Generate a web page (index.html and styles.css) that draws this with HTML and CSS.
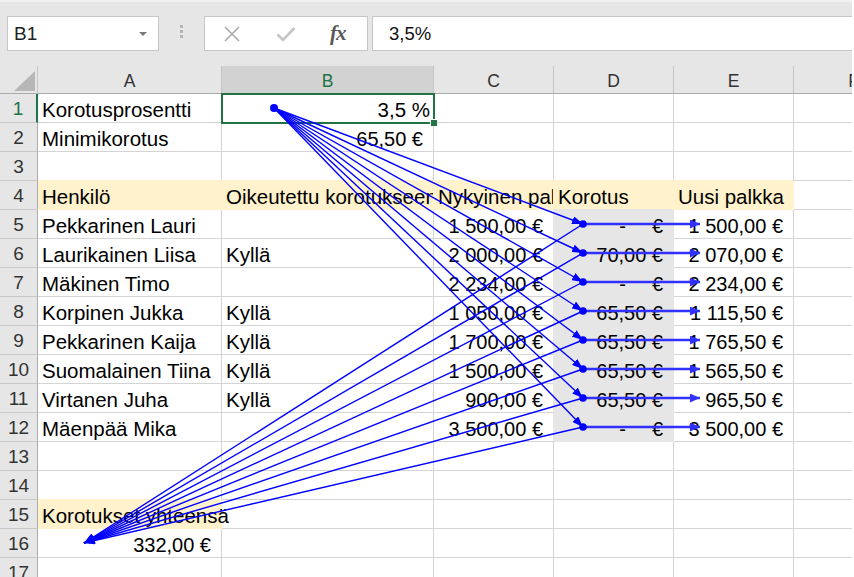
FILE: index.html
```html
<!DOCTYPE html>
<html lang="fi">
<head>
    <meta charset="UTF-8">
    <title>Korotukset</title>
    <link rel="stylesheet" href="styles.css">
</head>
<body>
<div class="page">

    <!-- formula bar -->
    <div class="toolbar">
        <div class="namebox"><span>B1</span><span class="caret"></span></div>
        <div class="grip"><i></i><i></i><i></i></div>
        <div class="fbuttons">
            <svg class="ico" width="18" height="18" viewBox="0 0 18 18"><path d="M2 2L16 16M16 2L2 16" stroke="#a8a8a8" stroke-width="1.5" fill="none"/></svg>
            <svg class="ico" width="20" height="16" viewBox="0 0 20 16"><path d="M1.5 8.5L7 14L18.5 2" stroke="#c6c6c6" stroke-width="2.6" fill="none"/></svg>
            <span class="fx">fx</span>
        </div>
        <div class="finput">3,5%</div>
    </div>

    <!-- sheet -->
    <div class="sheet">
        <div class="corner"></div>
        <div class="hd">A</div>
        <div class="hd sel">B</div>
        <div class="hd">C</div>
        <div class="hd">D</div>
        <div class="hd">E</div>
        <div class="hd">F</div>

        <div class="rh sel">1</div>
        <div class="c">Korotusprosentti</div>
        <div class="c num active">3,5 %</div>
        <div class="c"></div><div class="c"></div><div class="c"></div><div class="c"></div>

        <div class="rh">2</div>
        <div class="c">Minimikorotus</div>
        <div class="c acc">65,50 €</div>
        <div class="c"></div><div class="c"></div><div class="c"></div><div class="c"></div>

        <div class="rh">3</div>
        <div class="c"></div><div class="c"></div><div class="c"></div><div class="c"></div><div class="c"></div><div class="c"></div>

        <div class="rh">4</div>
        <div class="c yel ca">Henkilö</div>
        <div class="c yel">Oikeutettu korotukseen</div>
        <div class="c yel">Nykyinen palkka</div>
        <div class="c yel">Korotus</div>
        <div class="c yel">Uusi palkka</div>
        <div class="c"></div>

        <div class="rh">5</div>
        <div class="c">Pekkarinen Lauri</div>
        <div class="c"></div>
        <div class="c acc">1 500,00 €</div>
        <div class="c acc gry"><span class="dash">-</span>€</div>
        <div class="c acc">1 500,00 €</div>
        <div class="c"></div>

        <div class="rh">6</div>
        <div class="c">Laurikainen Liisa</div>
        <div class="c">Kyllä</div>
        <div class="c acc">2 000,00 €</div>
        <div class="c acc gry">70,00 €</div>
        <div class="c acc">2 070,00 €</div>
        <div class="c"></div>

        <div class="rh">7</div>
        <div class="c">Mäkinen Timo</div>
        <div class="c"></div>
        <div class="c acc">2 234,00 €</div>
        <div class="c acc gry"><span class="dash">-</span>€</div>
        <div class="c acc">2 234,00 €</div>
        <div class="c"></div>

        <div class="rh">8</div>
        <div class="c">Korpinen Jukka</div>
        <div class="c">Kyllä</div>
        <div class="c acc">1 050,00 €</div>
        <div class="c acc gry">65,50 €</div>
        <div class="c acc">1 115,50 €</div>
        <div class="c"></div>

        <div class="rh">9</div>
        <div class="c">Pekkarinen Kaija</div>
        <div class="c">Kyllä</div>
        <div class="c acc">1 700,00 €</div>
        <div class="c acc gry">65,50 €</div>
        <div class="c acc">1 765,50 €</div>
        <div class="c"></div>

        <div class="rh">10</div>
        <div class="c">Suomalainen Tiina</div>
        <div class="c">Kyllä</div>
        <div class="c acc">1 500,00 €</div>
        <div class="c acc gry">65,50 €</div>
        <div class="c acc">1 565,50 €</div>
        <div class="c"></div>

        <div class="rh">11</div>
        <div class="c">Virtanen Juha</div>
        <div class="c">Kyllä</div>
        <div class="c acc">900,00 €</div>
        <div class="c acc gry">65,50 €</div>
        <div class="c acc">965,50 €</div>
        <div class="c"></div>

        <div class="rh">12</div>
        <div class="c">Mäenpää Mika</div>
        <div class="c"></div>
        <div class="c acc">3 500,00 €</div>
        <div class="c acc gry"><span class="dash">-</span>€</div>
        <div class="c acc">3 500,00 €</div>
        <div class="c"></div>

        <div class="rh">13</div>
        <div class="c"></div><div class="c"></div><div class="c"></div><div class="c"></div><div class="c"></div><div class="c"></div>

        <div class="rh">14</div>
        <div class="c"></div><div class="c"></div><div class="c"></div><div class="c"></div><div class="c"></div><div class="c"></div>

        <div class="rh">15</div>
        <div class="c yel ca spill">Korotukset yhteensä</div>
        <div class="c"></div><div class="c"></div><div class="c"></div><div class="c"></div><div class="c"></div>

        <div class="rh">16</div>
        <div class="c acc">332,00 €</div>
        <div class="c"></div><div class="c"></div><div class="c"></div><div class="c"></div><div class="c"></div>

        <div class="rh">17</div>
        <div class="c"></div><div class="c"></div><div class="c"></div><div class="c"></div><div class="c"></div><div class="c"></div>
    </div>

    <!-- trace dependents arrows -->
    <svg class="arrows" width="852" height="577" viewBox="0 0 852 577">
        <defs>
            <marker id="ah" viewBox="0 0 11 8" refX="11" refY="4" markerWidth="11" markerHeight="8" markerUnits="userSpaceOnUse" orient="auto">
                <path d="M0 0L11 4L0 8z" fill="#0000ff"/>
            </marker>
            <marker id="ah2" viewBox="0 0 10 9" refX="10" refY="4.5" markerWidth="10" markerHeight="9" markerUnits="userSpaceOnUse" orient="auto">
                <path d="M0 0L10 4.5L0 9z" fill="#3030ff"/>
            </marker>
        </defs>
        <g class="thin">
            <!-- B1 to D5:D12 -->
            <line x1="274" y1="108" x2="583" y2="224"/>
            <line x1="274" y1="108" x2="583" y2="253"/>
            <line x1="274" y1="108" x2="583" y2="282"/>
            <line x1="274" y1="108" x2="583" y2="311"/>
            <line x1="274" y1="108" x2="583" y2="340"/>
            <line x1="274" y1="108" x2="583" y2="369"/>
            <line x1="274" y1="108" x2="583" y2="398"/>
            <line x1="274" y1="108" x2="583" y2="427"/>
            <!-- D5:D12 to A16 -->
            <line x1="583" y1="224" x2="84" y2="543"/>
            <line x1="583" y1="253" x2="84" y2="543"/>
            <line x1="583" y1="282" x2="84" y2="543"/>
            <line x1="583" y1="311" x2="84" y2="543"/>
            <line x1="583" y1="340" x2="84" y2="543"/>
            <line x1="583" y1="369" x2="84" y2="543"/>
            <line x1="583" y1="398" x2="84" y2="543"/>
            <line x1="583" y1="427" x2="84" y2="543"/>
        </g>
        <g class="thick">
            <!-- D to E -->
            <line x1="583" y1="224" x2="700" y2="224"/>
            <line x1="583" y1="253" x2="700" y2="253"/>
            <line x1="583" y1="282" x2="700" y2="282"/>
            <line x1="583" y1="311" x2="700" y2="311"/>
            <line x1="583" y1="340" x2="700" y2="340"/>
            <line x1="583" y1="369" x2="700" y2="369"/>
            <line x1="583" y1="398" x2="700" y2="398"/>
            <line x1="583" y1="427" x2="700" y2="427"/>
        </g>
        <g class="dots">
            <circle cx="274" cy="108" r="4"/>
            <circle cx="583" cy="224" r="3.8"/>
            <circle cx="583" cy="253" r="3.8"/>
            <circle cx="583" cy="282" r="3.8"/>
            <circle cx="583" cy="311" r="3.8"/>
            <circle cx="583" cy="340" r="3.8"/>
            <circle cx="583" cy="369" r="3.8"/>
            <circle cx="583" cy="398" r="3.8"/>
            <circle cx="583" cy="427" r="3.8"/>
        </g>
    </svg>
</div>
</body>
</html>
```

FILE: styles.css
```css
html, body {
    margin: 0;
    padding: 0;
    background: #ffffff;
    height: 577px;
    overflow: hidden;
}

.page {
    position: relative;
    width: 852px;
    height: 577px;
    overflow: hidden;
    font-family: "Liberation Sans", Arial, sans-serif;
    color: #000;
}

/* formula bar */
.toolbar {
    height: 66px;
    box-sizing: border-box;
    background: #e6e6e6;
    border-top: 2px solid #f1f1f1;
    padding: 14px 0 0 7px;
    display: flex;
    align-items: flex-start;
}

.namebox {
    width: 152px;
    height: 35px;
    box-sizing: border-box;
    border: 1px solid #c6c6c6;
    background: #fff;
    display: flex;
    align-items: center;
    justify-content: space-between;
    padding: 1px 11px 0 6px;
    font-size: 19px;
    color: #222;
}

.caret {
    width: 0;
    height: 0;
    border-left: 4px solid transparent;
    border-right: 4px solid transparent;
    border-top: 4px solid #7a7a7a;
}

.grip {
    width: 45px;
    display: flex;
    flex-direction: column;
    align-items: center;
    gap: 2px;
    padding-top: 9px;
}

.grip i {
    display: block;
    width: 3px;
    height: 3px;
    background: #b5b5b5;
}

.fbuttons {
    width: 164px;
    height: 35px;
    box-sizing: border-box;
    border: 1px solid #c6c6c6;
    background: #fff;
    display: flex;
    align-items: center;
    gap: 35px;
    padding-left: 18px;
}

.ico {
    display: block;
}

.fx {
    font-family: "Liberation Serif", "DejaVu Serif", serif;
    font-style: italic;
    font-weight: bold;
    font-size: 21px;
    color: #5a5a5a;
    letter-spacing: -1px;
    margin-left: -1px;
}

.finput {
    flex: 1;
    margin-left: 4px;
    height: 35px;
    box-sizing: border-box;
    border: 1px solid #c6c6c6;
    border-right: none;
    background: #fff;
    padding: 1px 0 0 16px;
    font-size: 18.5px;
    line-height: 32px;
    color: #111;
}

/* sheet grid */
.sheet {
    display: grid;
    grid-template-columns: 38px 184px 212px 120px 120px 120px 120px;
    grid-template-rows: 28px repeat(17, 29px);
}

.corner {
    background: #e6e6e6;
    border-right: 1px solid #c6c6c6;
    border-bottom: 1px solid #ababab;
    display: flex;
    align-items: flex-end;
    justify-content: flex-end;
    padding: 0 2px 2px 0;
}

.corner::after {
    content: "";
    width: 21px;
    height: 20px;
    background: #b7b7b7;
    clip-path: polygon(100% 0, 100% 100%, 0 100%);
}

.hd {
    background: #e6e6e6;
    border-right: 1px solid #c4c4c4;
    border-bottom: 1px solid #ababab;
    text-align: center;
    font-size: 17.5px;
    line-height: 23px;
    padding-top: 4px;
    color: #333;
}

.hd.sel {
    background: #d2d2d2;
    color: #217346;
}

.rh {
    background: #e6e6e6;
    border-right: 1px solid #ababab;
    border-bottom: 1px solid #c9c9c9;
    text-align: center;
    font-size: 19px;
    line-height: 24px;
    padding-top: 3px;
    color: #333;
}

.rh.sel {
    color: #217346;
    border-right: 2px solid #217346;
}

.c {
    border-right: 1px solid #d4d4d4;
    border-bottom: 1px solid #d4d4d4;
    padding: 4px 3px 0 4px;
    font-size: 20.5px;
    line-height: 24px;
    white-space: nowrap;
    overflow: hidden;
}

.num {
    text-align: right;
}

.acc {
    text-align: right;
    padding-right: 10px;
    font-size: 20px;
}

.dash {
    margin-right: 26px;
}

/* filled cells hide the gridlines around them */
.yel {
    background: #fff2cc;
    border-color: #fff2cc;
    box-shadow: -1px -1px 0 #fff2cc;
}

.gry {
    background: #e7e6e6;
    border-color: #e7e6e6;
    box-shadow: -1px -1px 0 #e7e6e6;
}

.ca {
    box-shadow: 0 -1px 0 #fff2cc;
}

.spill {
    overflow: visible;
}

.active {
    position: relative;
    overflow: visible;
    outline: 2px solid #217346;
    outline-offset: -1px;
}

.active::after {
    content: "";
    position: absolute;
    right: -4px;
    bottom: -4px;
    width: 6px;
    height: 6px;
    background: #217346;
    border-left: 1px solid #fff;
    border-top: 1px solid #fff;
}

/* arrows */
.arrows {
    position: absolute;
    top: 0;
    left: 0;
    pointer-events: none;
}

.thin line {
    stroke: #0000ff;
    stroke-width: 1.4;
    marker-end: url(#ah);
}

.thick line {
    stroke: #3030ff;
    stroke-width: 2.6;
    marker-end: url(#ah2);
}

.dots circle {
    fill: #0000ff;
}
```
